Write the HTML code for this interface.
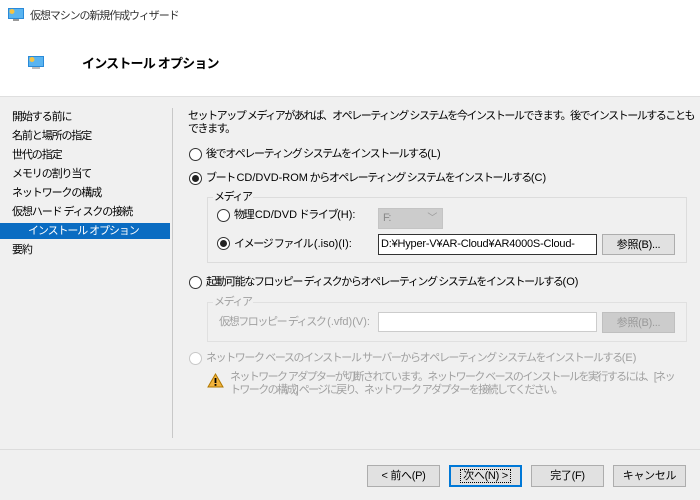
<!DOCTYPE html><html><head><meta charset="utf-8"><style>
*{margin:0;padding:0;box-sizing:border-box}
body{width:700px;height:500px;background:#f0f0f0;font-family:"Liberation Sans","Noto Sans CJK JP",sans-serif;font-size:11px;letter-spacing:-1.4px;color:#000;position:relative;overflow:hidden}
i{font-style:normal;letter-spacing:0}
.a{position:absolute;white-space:nowrap;line-height:14px}
.g{color:#a0a0a0}
.r{position:absolute;width:13px;height:13px;border:1px solid #333;border-radius:50%;background:#fff}
.r.on::after{content:"";position:absolute;left:2px;top:2px;width:7px;height:7px;border-radius:50%;background:#222}
.r.dis{border-color:#c8c8c8}
.box{position:absolute;border:1px solid #dcdcdc}
.btn{position:absolute;background:#e1e1e1;border:1px solid #adadad;text-align:center;line-height:20px;font-size:11px;letter-spacing:-0.3px}
.tb{position:absolute;background:#fff;border:1px solid #7a7a7a;padding-left:2px;line-height:18px;font-size:11px;letter-spacing:-0.2px;overflow:hidden;white-space:nowrap}
</style></head><body>
<div style="position:absolute;left:0;top:0;width:700px;height:97px;background:#fff;border-bottom:1px solid #dfdfdf"></div>
<svg style="position:absolute;left:8px;top:8px" width="16" height="14"><rect x="0" y="0" width="16" height="11" fill="#2a8ad8"/><rect x="1" y="1" width="14" height="9" fill="#5ab4f0"/><circle cx="4" cy="3.5" r="2.5" fill="#f6c342"/><rect x="5" y="11" width="6" height="2" fill="#999"/></svg>
<div class="a" style="left:30px;top:9px;color:#333;letter-spacing:-1.1px">仮想マシンの新規作成ウィザード</div>
<svg style="position:absolute;left:28px;top:56px" width="16" height="14"><rect x="0" y="0" width="16" height="11" fill="#2a8ad8"/><rect x="1" y="1" width="14" height="9" fill="#5ab4f0"/><circle cx="4" cy="3.5" r="2.5" fill="#f6c342"/><rect x="4" y="11" width="8" height="2" fill="#bbb"/></svg>
<div class="a" style="left:82px;top:56px;font-size:13px;letter-spacing:-0.8px;font-weight:bold;line-height:16px">インストール オプション</div>

<div class="a" style="left:12px;top:110px;letter-spacing:-1.1px">開始する前に</div>
<div class="a" style="left:12px;top:129px;letter-spacing:-1.1px">名前と場所の指定</div>
<div class="a" style="left:12px;top:148px;letter-spacing:-1.1px">世代の指定</div>
<div class="a" style="left:12px;top:167px;letter-spacing:-1.1px">メモリの割り当て</div>
<div class="a" style="left:12px;top:186px;letter-spacing:-1.1px">ネットワークの構成</div>
<div class="a" style="left:12px;top:205px;letter-spacing:-1.1px">仮想ハード ディスクの接続</div>
<div style="position:absolute;left:0;top:223px;width:170px;height:16px;background:#0a6cc2"></div>
<div class="a" style="left:28px;top:224px;color:#fff;letter-spacing:-1.1px">インストール オプション</div>
<div class="a" style="left:12px;top:243px;letter-spacing:-1.1px">要約</div>
<div style="position:absolute;left:172px;top:108px;width:1px;height:330px;background:#c8c8c8"></div>

<div class="a" style="left:188px;top:110px;line-height:13px;letter-spacing:-1.45px">セットアップ メディアがあれば、オペレーティング システムを今インストールできます。後でインストールすることも<br>できます。</div>
<div class="r" style="left:189px;top:148px"></div>
<div class="a" style="left:206px;top:147px">後でオペレーティング システムをインストールする<i>(L)</i></div>
<div class="r on" style="left:189px;top:172px"></div>
<div class="a" style="left:206px;top:171px">ブート <i>CD/DVD-ROM</i> からオペレーティング システムをインストールする<i>(C)</i></div>
<div class="box" style="left:207px;top:197px;width:480px;height:66px"></div>
<div class="a" style="left:213px;top:190px;background:#f0f0f0;padding:0 1px">メディア</div>
<div class="r" style="left:217px;top:209px"></div>
<div class="a" style="left:234px;top:208px">物理 <i>CD/DVD</i> ドライブ<i>(H):</i></div>
<div style="position:absolute;left:378px;top:208px;width:65px;height:21px;background:#ccc;border:1px solid #c4c4c4;color:#888;padding-left:4px;line-height:19px">F:<span style="position:absolute;right:6px;top:0;color:#999;font-size:10px">﹀</span></div>
<div class="r on" style="left:217px;top:237px"></div>
<div class="a" style="left:234px;top:237px">イメージ ファイル <i>(.iso)(I):</i></div>
<div class="tb" style="left:378px;top:234px;width:219px;height:21px;border-color:#333">D:¥Hyper-V¥AR-Cloud¥AR4000S-Cloud-</div>
<div class="btn" style="left:602px;top:234px;width:73px;height:21px">参照(B)...</div>

<div class="r" style="left:189px;top:276px"></div>
<div class="a" style="left:206px;top:275px">起動可能なフロッピー ディスクからオペレーティング システムをインストールする<i>(O)</i></div>
<div class="box" style="left:207px;top:302px;width:480px;height:40px;border-color:#e0e0e0"></div>
<div class="a g" style="left:213px;top:295px;background:#f0f0f0;padding:0 1px">メディア</div>
<div class="a g" style="left:219px;top:315px">仮想フロッピー ディスク <i>(.vfd)(V):</i></div>
<div class="tb" style="left:378px;top:312px;width:219px;height:20px;border-color:#ccc"></div>
<div class="btn" style="left:602px;top:312px;width:73px;height:21px;background:#ccc;border-color:#bfbfbf;color:#999">参照(B)...</div>

<div class="r dis" style="left:189px;top:352px"></div>
<div class="a g" style="left:206px;top:351px">ネットワーク ベースのインストール サーバーからオペレーティング システムをインストールする<i>(E)</i></div>
<svg style="position:absolute;left:207px;top:373px" width="17" height="15"><path d="M8.5 1 L16 14 L1 14 Z" fill="#f2b33d" stroke="#b07800" stroke-width="1"/><rect x="7.6" y="5" width="1.8" height="5" fill="#000"/><rect x="7.6" y="11" width="1.8" height="1.8" fill="#000"/></svg>
<div class="a g" style="left:230px;top:371px;line-height:13px;letter-spacing:-1.6px">ネットワーク アダプターが切断されています。ネットワーク ベースのインストールを実行するには、[ネッ<br>トワークの構成] ページに戻り、ネットワーク アダプターを接続してください。</div>

<div style="position:absolute;left:0;top:449px;width:700px;height:1px;background:#dcdcdc"></div>
<div class="btn" style="left:367px;top:465px;width:73px;height:22px">&lt; 前へ(P)</div>
<div class="btn" style="left:449px;top:465px;width:73px;height:22px;border:2px solid #0078d7;line-height:18px"><span style="outline:1px dotted #000;padding:0 2px">次へ(N) &gt;</span></div>
<div class="btn" style="left:531px;top:465px;width:73px;height:22px">完了(F)</div>
<div class="btn" style="left:613px;top:465px;width:73px;height:22px">キャンセル</div>
</body></html>
